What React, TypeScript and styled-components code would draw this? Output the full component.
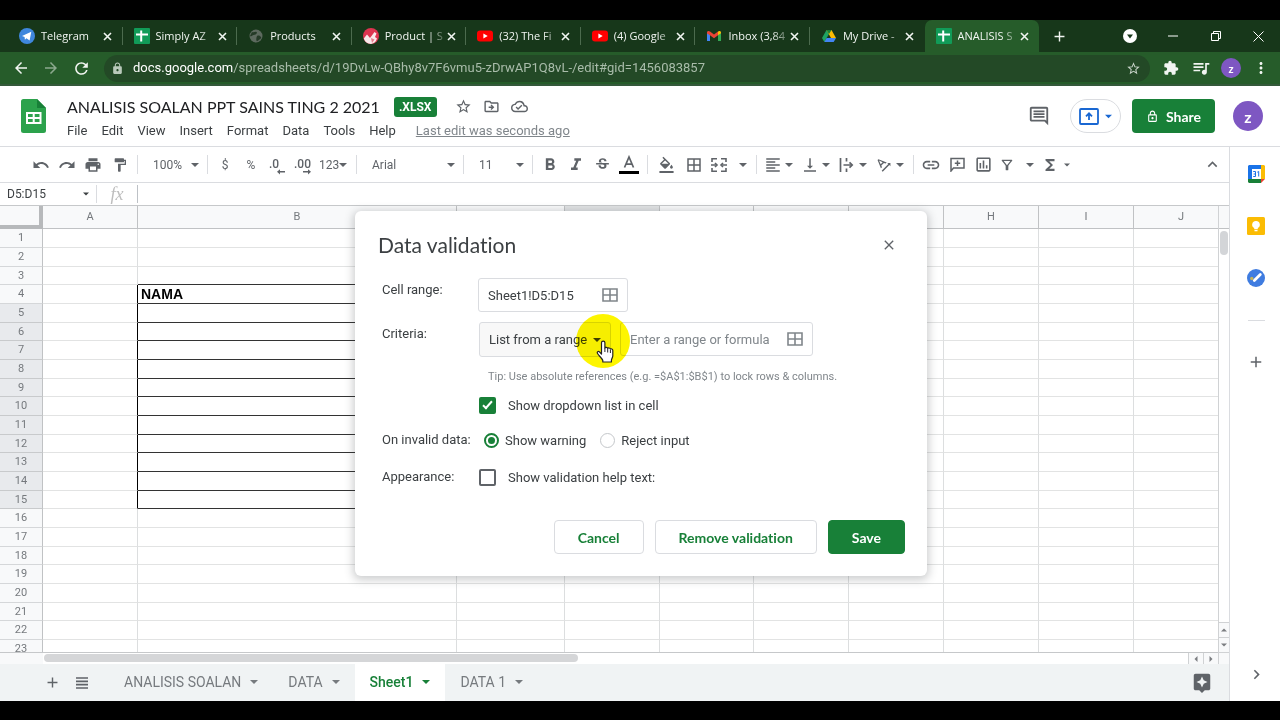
import React from "react";
import styled, { createGlobalStyle, css } from "styled-components";
import {
  MdAdd, MdArrowBack, MdArrowForward, MdAssistant, MdBorderAll, MdChevronRight, MdClose,
  MdExtension, MdFormatAlignLeft, MdFormatBold, MdFormatColorFill, MdFormatItalic, MdFormatPaint,
  MdFunctions, MdKeyboardArrowUp, MdLink, MdLock, MdMoreVert, MdOutlineCloudDone,
  MdOutlineDriveFileMove, MdOutlineFilterAlt, MdOutlineInsertChart, MdOutlineInsertComment,
  MdOutlineLock, MdPrint, MdQueueMusic, MdRedo, MdRefresh, MdStarBorder, MdStrikethroughS,
  MdTextRotationAngleup, MdUndo, MdVerticalAlignBottom,
} from "react-icons/md";

const ui = `Roboto, "Liberation Sans", sans-serif`;
const display = `Lato, "Open Sans", sans-serif`;
const chrome = `"Open Sans", "Noto Sans", sans-serif`;
const green = "#188038";
const iconGrey = "#5f6368";

const Global = createGlobalStyle`
  *, *::before, *::after { box-sizing: border-box; }
  body { margin: 0; background: #000; font-family: ${ui}; color: #3c4043; }
  button, input, select { font: inherit; color: inherit; margin: 0; padding: 0; border: 0; background: none; border-radius: 0; }
  button { display: inline-flex; align-items: center; justify-content: center; cursor: pointer; white-space: nowrap; }
  svg { display: block; flex: none; }
`;

const Page = styled.div`
  position: relative;
  display: flex;
  flex-direction: column;
  height: 100vh;
  padding: 20px 0 19px;
  background: #000;
  overflow: hidden;
`;

/* Browser window frame */
const TabStrip = styled.div`
  display: flex;
  flex: none;
  height: 32px;
  padding-left: 8px;
  background: #17371a;
  color: #f1f5f1;
  font-family: ${chrome};
`;
const TabList = styled.div`
  display: flex;
  flex: 0 1 1031px;
  min-width: 0;
`;
const BrowserTab = styled.div<{ $active?: boolean }>`
  display: flex;
  flex: 1 1 0;
  min-width: 0;
  align-items: center;
  padding: 0 9px 0 11px;
  position: relative;
  border-radius: 7px 7px 0 0;
  background: ${(p) => (p.$active ? "#265c2a" : "transparent")};
  &:not(:nth-last-child(-n + 2))::after {
    content: "";
    position: absolute;
    right: 0;
    top: 7px;
    width: 1px;
    height: 18px;
    background: #4c6b4e;
  }
`;
const TabTitle = styled.button<{ $fade: boolean }>`
  flex: 1;
  min-width: 0;
  margin-left: 6px;
  justify-content: flex-start;
  overflow: hidden;
  font-size: 11px;
  line-height: 16px;
  ${(p) => p.$fade && css`mask-image: linear-gradient(90deg, #000 72%, rgba(0, 0, 0, 0.2));`}
`;
const CloseTab = styled.button`
  width: 12px;
  height: 16px;
`;
const NewTab = styled.button`
  width: 40px;
`;
const WindowControls = styled.div`
  display: flex;
  margin-left: auto;
  align-items: center;
`;
const WindowButton = styled.button`
  width: 43px;
  height: 28px;
`;
const AddressRow = styled.div`
  display: flex;
  flex: none;
  align-items: center;
  height: 34px;
  padding: 0 4px 0 6px;
  background: #265c2a;
  border-bottom: 2px solid #34593a;
  color: #f1f5f1;
  font-family: ${chrome};
`;
const NavButton = styled.button<{ $dim?: boolean }>`
  width: 30px;
  height: 28px;
  opacity: ${(p) => (p.$dim ? 0.5 : 1)};
`;
const Omnibox = styled.div`
  display: flex;
  flex: 1;
  min-width: 0;
  align-items: center;
  gap: 9px;
  height: 27px;
  margin: 0 6px 0 8px;
  padding: 0 9px 0 7px;
  border-radius: 14px;
  background: #234926;
`;
const Url = styled.span`
  flex: 1;
  min-width: 0;
  overflow: hidden;
  white-space: nowrap;
  font-family: ${ui};
  font-size: 13px;
  line-height: 18px;
  color: #a9bcaa;
  b { font-weight: 400; color: #fff; }
`;
const Avatar = styled.button<{ $size: number }>`
  flex: none;
  width: ${(p) => p.$size}px;
  height: ${(p) => p.$size}px;
  border-radius: 50%;
  background: #7e57c2;
  color: #fff;
  font-family: ${display};
  font-weight: 700;
  font-size: ${(p) => (p.$size > 24 ? 16 : 11)}px;
`;
const ProfileSlot = styled.div`
  display: flex;
  justify-content: center;
  width: 30px;
`;

/* Document header */
const DocHeader = styled.header`
  display: flex;
  flex: none;
  align-items: center;
  height: 61px;
  padding: 0 17px 0 21px;
  background: #fff;
  border-bottom: 1px solid #dadce0;
`;
const DocInfo = styled.div`
  display: flex;
  flex-direction: column;
  gap: 3px;
  margin-left: 21px;
  padding-top: 4px;
`;
const TitleLine = styled.div`
  display: flex;
  align-items: center;
  height: 22px;
`;
const DocTitle = styled.h1`
  margin: 0 14px 0 0;
  font-family: ${display};
  font-weight: 400;
  font-size: 16px;
  line-height: 22px;
  color: #202124;
  white-space: nowrap;
`;
const Badge = styled.span`
  padding: 0 5px;
  margin-right: 13px;
  border-radius: 3px;
  background: ${green};
  color: #fff;
  font-weight: 700;
  font-size: 12px;
  line-height: 20px;
`;
const TitleIcon = styled.button`
  width: 28px;
  height: 22px;
  color: ${iconGrey};
`;
const MenuLine = styled.nav`
  display: flex;
  gap: 14px;
  font-size: 13px;
  line-height: 20px;
`;
const MenuButton = styled.button`
  line-height: 20px;
`;
const LastEdit = styled.a`
  margin-left: 6px;
  color: #80868b;
  white-space: nowrap;
`;
const HeaderActions = styled.div`
  display: flex;
  align-items: center;
  margin-left: auto;
`;
const PresentButton = styled.button`
  gap: 6px;
  width: 51px;
  height: 34px;
  margin: 0 11px 0 17px;
  border: 1px solid #dadce0;
  border-radius: 17px;
  color: #1967d2;
`;
const ShareButton = styled.button`
  gap: 7px;
  width: 83px;
  height: 34px;
  margin-right: 18px;
  border-radius: 4px;
  background: ${green};
  color: #fff;
  font-family: ${display};
  font-weight: 700;
  font-size: 14px;
`;

/* Work area */
const Work = styled.div`
  display: flex;
  flex: 1;
  min-height: 0;
  background: #fff;
`;
const Editor = styled.main`
  display: flex;
  flex: 1;
  flex-direction: column;
  min-width: 0;
  border-right: 1px solid #dadce0;
`;
const Toolbar = styled.div`
  display: flex;
  flex: none;
  align-items: center;
  height: 36px;
  padding: 0 4px 0 28px;
  border-bottom: 1px solid #dadce0;
  color: ${iconGrey};
  font-size: 12px;
`;
const Tool = styled.button<{ $w?: number }>`
  flex: none;
  width: ${(p) => p.$w ?? 26}px;
  height: 26px;
`;
const SplitTool = styled.button<{ $w?: number; $gap?: number }>`
  flex: none;
  justify-content: flex-start;
  gap: ${(p) => p.$gap ?? 3}px;
  width: ${(p) => p.$w ?? 37}px;
  height: 26px;
  padding-left: 3px;
`;
const Divider = styled.span`
  flex: none;
  width: 1px;
  height: 19px;
  margin: 0 4px;
  background: #dadce0;
`;
const SelectBox = styled.div<{ $w: number }>`
  display: grid;
  flex: none;
  align-items: center;
  width: ${(p) => p.$w}px;
  height: 26px;
  > * { grid-area: 1 / 1; }
  > svg { justify-self: end; margin-right: 4px; pointer-events: none; }
  select { appearance: none; width: 100%; height: 26px; padding-left: 11px; outline: 0; }
`;
const CollapseTool = styled(Tool)`
  margin-left: auto;
`;
const FormulaBar = styled.div`
  display: flex;
  flex: none;
  align-items: center;
  height: 22px;
  color: #3c4043;
`;
const NameBox = styled.label`
  display: flex;
  align-items: center;
  width: 97px;
  height: 18px;
  padding: 0 7px;
  border-right: 1px solid #dadce0;
  input { flex: 1; min-width: 0; width: 100%; font-size: 12px; outline: 0; }
`;
const FxLabel = styled.span`
  width: 41px;
  border-right: 1px solid #bdc1c6;
  text-align: center;
  font-family: "Liberation Serif", serif;
  font-style: italic;
  font-size: 18px;
  line-height: 18px;
  color: #bdbdbd;
`;
const FormulaInput = styled.input`
  flex: 1;
  min-width: 0;
  outline: 0;
`;

/* Spreadsheet grid */
const GridArea = styled.div`
  display: grid;
  flex: 1;
  min-height: 0;
  grid-template-columns: minmax(0, 1fr) 11px;
  grid-template-rows: minmax(0, 1fr) 11px;
  border-top: 1px solid #c6c8ca;
`;
const SheetView = styled.div`
  overflow: hidden;
  border-bottom: 1px solid #c6c8ca;
`;
const Sheet = styled.table`
  width: 1229px;
  table-layout: fixed;
  border-collapse: separate;
  border-spacing: 0;
  thead tr { height: 23px; }
  tbody tr { height: 19px; }
  tbody tr:nth-child(3n) { height: 18px; }
`;
const ColHead = styled.th<{ $selected?: boolean }>`
  padding: 0;
  border-right: 1px solid #c0c2c4;
  border-bottom: 1px solid #c0c2c4;
  background: ${(p) => (p.$selected ? "#e0e2e4" : "#f8f9fa")};
  font-weight: 400;
  font-size: 11px;
  line-height: 14px;
  color: #75797d;
`;
const Corner = styled.th`
  padding: 0;
  border-right: 4px solid #b7b9bb;
  border-bottom: 4px solid #b7b9bb;
  background: #f8f9fa;
`;
const RowHead = styled.th<{ $selected: boolean }>`
  padding: 0;
  border-right: 1px solid #c0c2c4;
  border-bottom: 1px solid ${(p) => (p.$selected ? "#c8cacc" : "#d5d7d9")};
  background: ${(p) => (p.$selected ? "#e8eaed" : "#f8f9fa")};
  font-weight: 400;
  font-size: 11px;
  line-height: 14px;
  color: #75797d;
`;
const Cell = styled.td<{ $darkRight: boolean; $darkBottom: boolean }>`
  padding: 0 3px;
  border-right: 1px solid ${(p) => (p.$darkRight ? "#000" : "#dcdedf")};
  border-bottom: 1px solid ${(p) => (p.$darkBottom ? "#333" : "#e2e3e3")};
  font-family: "Liberation Sans", Arial, sans-serif;
  font-weight: 700;
  font-size: 14px;
  line-height: 16px;
  color: #000;
`;
const VTrack = styled.div`
  display: flex;
  flex-direction: column;
  border-left: 1px solid #d0d2d4;
  border-bottom: 1px solid #d0d2d4;
  &::before { content: ""; height: 23px; flex: none; border-bottom: 1px solid #c0c2c4; background: #f8f9fa; }
`;
const HTrack = styled.div`
  display: flex;
  padding-left: 44px;
  background: linear-gradient(90deg, #f8f9fa 43px, #fff 43px);
`;
const VThumb = styled.span`
  height: 24px;
  margin: 2px 1px auto;
  border-radius: 4px;
  background: #d3d5d8;
`;
const HThumb = styled.span`
  flex: 0 1 534px;
  height: 8px;
  margin: 1px auto 0 0;
  border-radius: 4px;
  background: #d5d6d8;
`;
const ScrollButton = styled.button<{ $vertical?: boolean }>`
  flex: none;
  width: ${(p) => (p.$vertical ? "auto" : "15px")};
  height: ${(p) => (p.$vertical ? "15px" : "auto")};
  border-left: ${(p) => (p.$vertical ? "0" : "1px solid #d0d2d4")};
  border-top: ${(p) => (p.$vertical ? "1px solid #d0d2d4" : "0")};
  background: #f8f9fa;
  color: #7a7d80;
`;
const TrackCorner = styled.div`
  border-left: 1px solid #d0d2d4;
  background: #f8f9fa;
`;

const SheetTabs = styled.div`
  display: flex;
  flex: none;
  align-items: center;
  height: 37px;
  padding: 0 16px 0 39px;
  background: #f0f3f4;
  color: ${iconGrey};
`;
const SheetTab = styled.button<{ $active?: boolean }>`
  flex: none;
  gap: 9px;
  height: 37px;
  padding: 0 15px 2px;
  background: ${(p) => (p.$active ? "#fff" : "transparent")};
  color: ${(p) => (p.$active ? green : "#767a7e")};
  font-weight: ${(p) => (p.$active ? 500 : 400)};
  font-size: 14px;
`;
const ListSheets = styled(Tool)`
  margin: 0 14px 0 4px;
`;
const Explore = styled.button`
  margin-left: auto;
  color: ${iconGrey};
`;

const SidePanel = styled.aside`
  display: flex;
  flex: none;
  flex-direction: column;
  align-items: center;
  width: 50px;
  padding: 18px 0 17px 2px;
  color: ${iconGrey};
`;
const SideButton = styled.button`
  width: 30px;
  height: 18px;
  margin-bottom: 34px;
`;
const SideRule = styled.hr`
  width: 17px;
  margin: -1px 0 32px;
  border: 0;
  border-top: 1px solid #dadce0;
`;
const SideExpand = styled.button`
  margin-top: auto;
`;

/* Dialog */
const Overlay = styled.div`
  position: absolute;
  inset: 0;
  display: flex;
  align-items: flex-start;
  justify-content: center;
  padding: 211px 0 0 2px;
`;
const Dialog = styled.section`
  display: flex;
  flex-direction: column;
  width: 572px;
  padding: 22px 22px 22px 23px;
  border-radius: 6px;
  background: #fff;
  box-shadow: 0 2px 8px 2px rgba(60, 64, 67, 0.25);
  font-size: 13px;
`;
const DialogHead = styled.div`
  display: flex;
  align-items: center;
  justify-content: space-between;
  height: 24px;
  margin-bottom: 21px;
  padding-right: 8px;
`;
const DialogTitle = styled.h2`
  margin: 0;
  font-family: ${display};
  font-weight: 400;
  font-size: 21px;
  font-variant-ligatures: none;
  line-height: 24px;
  color: #3c4043;
`;
const Row = styled.div<{ $gap: number }>`
  display: flex;
  align-items: flex-start;
  margin-top: ${(p) => p.$gap}px;
  padding-left: 4px;
`;
const RowLabel = styled.span`
  flex: none;
  width: 96px;
  line-height: 24px;
  white-space: nowrap;
`;
const Field = styled.div<{ $w: number }>`
  display: flex;
  align-items: center;
  width: ${(p) => p.$w}px;
  height: 34px;
  padding: 0 9px;
  border: 1px solid #dadce0;
  border-radius: 3px;
  color: #80868b;
  input { flex: 1; min-width: 0; width: 100%; outline: 0; color: #3c4043; }
  input::placeholder { color: #80868b; opacity: 1; }
`;
const CriteriaSelect = styled.div`
  position: relative;
  display: grid;
  align-items: center;
  width: 132px;
  height: 35px;
  margin: 0 9px 0 1px;
  border: 1px solid #dadce0;
  border-radius: 3px;
  background: #f8f8f8;
  > select, > svg { grid-area: 1 / 1; }
  > svg { justify-self: end; margin-right: 9px; pointer-events: none; }
  select { appearance: none; height: 33px; padding-left: 9px; outline: 0; color: #3c4043; }
`;
const ClickHalo = styled.span`
  position: absolute;
  left: 96px;
  top: -9px;
  z-index: 1;
  width: 54px;
  height: 54px;
  border-radius: 50%;
  background: #fdf500;
  mix-blend-mode: multiply;
  pointer-events: none;
`;
const Pointer = styled.svg`
  position: absolute;
  left: 116px;
  top: 17px;
  z-index: 2;
`;
const Tip = styled.p`
  margin: 12px 0 0 110px;
  font-size: 11px;
  line-height: 16px;
  color: #80868b;
`;
const Choice = styled.label<{ $gap: number }>`
  display: flex;
  align-items: center;
  gap: ${(p) => p.$gap}px;
  height: 24px;
  margin-right: 14px;
  white-space: nowrap;
`;
const Check = styled.input`
  appearance: none;
  display: grid;
  place-items: center;
  width: 17px;
  height: 17px;
  margin-left: 1px;
  border: 2px solid #5f6368;
  border-radius: 2px;
  &:checked { border-color: ${green}; background: ${green}; }
  &:checked::after {
    content: "";
    width: 5px;
    height: 10px;
    border: solid #fff;
    border-width: 0 2px 2px 0;
    transform: rotate(42deg);
    margin-top: -3px;
  }
`;
const Radio = styled.input`
  appearance: none;
  display: grid;
  place-items: center;
  width: 15px;
  height: 15px;
  border: 1px solid #c4c7ca;
  border-radius: 50%;
  &:checked { border: 2px solid ${green}; }
  &:checked::after { content: ""; width: 7px; height: 7px; border-radius: 50%; background: ${green}; }
`;
const Radios = styled.div`
  display: flex;
  margin-left: 6px;
`;
const Actions = styled.div`
  display: flex;
  justify-content: flex-end;
  gap: 11px;
  margin-top: 31px;
`;
const ActionButton = styled.button<{ $primary?: boolean }>`
  height: 34px;
  padding: 0 23px;
  border: 1px solid ${(p) => (p.$primary ? green : "#dadce0")};
  border-radius: 4px;
  background: ${(p) => (p.$primary ? green : "#fff")};
  color: ${(p) => (p.$primary ? "#fff" : green)};
  font-family: ${display};
  font-weight: 700;
  font-size: 14px;
  font-variant-ligatures: none;
`;

/* Small drawings */
const Caret = ({ size = 8, dir = "down" }: { size?: number; dir?: "down" | "up" | "left" | "right" }) => {
  const d = { down: "M0 2h8L4 6z", up: "M0 6h8L4 2z", left: "M6 0v8L2 4z", right: "M2 0v8l4-4z" }[dir];
  return <svg width={size} height={size} viewBox="0 0 8 8"><path fill="currentColor" d={d} /></svg>;
};
const Cross = () => (
  <svg width="9" height="9" viewBox="0 0 9 9" stroke="currentColor" strokeWidth="1.6"><path d="M1 1l7 7M8 1L1 8" /></svg>
);
const TelegramIcon = () => (
  <svg width="16" height="16" viewBox="0 0 16 16"><circle cx="8" cy="8" r="8" fill="#3f87dd" /><path d="M3 8l9.300-4.200-1.700 8.800-3.200-2.300-1.500 1.500-.3-2.700z" fill="#fff" /></svg>
);
const SheetsFavicon = () => (
  <svg width="16" height="16" viewBox="0 0 16 16"><rect width="16" height="16" rx="1" fill="#119b58" /><path d="M6.200 2.500h2v11h-2zM2 5.500h12v2H2z" fill="#fff" /></svg>
);
const GlobeIcon = () => (
  <svg width="16" height="16" viewBox="0 0 16 16"><circle cx="8" cy="8" r="6.500" fill="#5d6a5f" /><path d="M4 4c2 1 3-1 4.500 0S7 7 5.500 7 4 9 2 8M9 8c2-1 3 0 4 1s-2 3-3.500 4S8 10 9 8z" fill="#243a27" /></svg>
);
const ProductIcon = () => (
  <svg width="16" height="16" viewBox="0 0 16 16"><circle cx="8" cy="8" r="8" fill="#dd3450" /><path d="M.8 10.500L4 6.500l3 3.500 4.500-6 2 1.500L12 9l2 1.500A8 8 0 0 1 8 16 8 8 0 0 1 .8 10.500z" fill="#f8e8ea" /><path d="M8 10l3.500 1.500L9 15z" fill="#e77a8a" /></svg>
);
const YoutubeIcon = () => (
  <svg width="16" height="16" viewBox="0 0 16 16"><rect y="2.500" width="16" height="11" rx="3" fill="#f00" /><path d="M6.400 5.500v5l4.300-2.500z" fill="#fff" /></svg>
);
const GmailIcon = () => (
  <svg width="16" height="16" viewBox="0 0 16 16">
    <path d="M1 4v9h3V7z" fill="#4285f4" /><path d="M15 4v9h-3V7z" fill="#34a853" />
    <path d="M1 4.500C1 3 2.500 2.500 4 3.500l4 3 4-3v3.800l-4 3-4-3L1 5.500z" fill="#ea4335" /><path d="M12 3.500c1.500-1 3-.5 3 1v.8l-3 2z" fill="#fbbc04" />
  </svg>
);
const DriveIcon = () => (
  <svg width="16" height="16" viewBox="0 0 16 16">
    <path d="M5.500 2L1 10l2.300 4L8 6z" fill="#1ea362" /><path d="M5.500 2h5L15 10h-5z" fill="#fbbc04" /><path d="M5.600 10H15l-2.300 4H3.300z" fill="#4285f4" /><path d="M5.500 2h5L8 6z" fill="#188038" />
  </svg>
);
const SheetsLogo = () => (
  <svg width="25" height="34" viewBox="0 0 25 34">
    <path d="M2.500 0H16l9 9v22.500a2.500 2.500 0 0 1-2.500 2.500h-20A2.500 2.500 0 0 1 0 31.500v-29A2.500 2.500 0 0 1 2.500 0z" fill="#2ca24c" />
    <path d="M16 0l9 9h-9z" fill="#188038" />
    <path d="M5 13h15.500v12H5zM7 15v3h4.700v-3zm6.700 0v3h4.800v-3zM7 20v3h4.700v-3zm6.700 0v3h4.800v-3z" fill="#fff" fillRule="evenodd" />
  </svg>
);
const TextColorIcon = () => (
  <svg width="20" height="20" viewBox="0 0 20 20"><path d="M5.500 12.500L10 2l4.500 10.500M7 9.200h6" fill="none" stroke={iconGrey} strokeWidth="1.700" /><path d="M0 16h20v3H0z" fill="#000" /></svg>
);
const MergeIcon = () => (
  <svg width="16" height="16" viewBox="0 0 16 16" fill="none" stroke="currentColor" strokeWidth="1.600">
    <path d="M6 1.800H1V5M10 1.800h5V5M6 14.200H1V11M10 14.200h5V11M0 8h5.500M16 8h-5.500" /><path d="M4 6l2 2-2 2M12 6l-2 2 2 2" />
  </svg>
);
const OverflowIcon = () => (
  <svg width="16" height="16" viewBox="0 0 16 16" fill="none" stroke="currentColor" strokeWidth="1.700">
    <path d="M2.500 1v14M8.500 1v3.500M8.500 11.500V15M5.500 8H14" /><path d="M11.500 5.300L14.200 8l-2.700 2.700" />
  </svg>
);
const DecimalTool = ({ text, right }: { text: string; right?: boolean }) => (
  <svg width="20" height="20" viewBox="0 0 20 20" fontFamily="Roboto, sans-serif" fontSize="12" fontWeight="500" fill="currentColor">
    <text x={right ? 1 : 2} y="13">{text}</text>
    <path d={right ? "M10 16h5v-1.800l3 2.600-3 2.600v-1.800h-5z" : "M18 16h-5v-1.800l-3 2.600 3 2.600v-1.800h5z"} />
  </svg>
);
const AddCommentIcon = () => (
  <svg width="15" height="15" viewBox="0 0 15 15" fill="none" stroke="currentColor" strokeWidth="1.500">
    <path d="M1 14V1.500h13V11H3.500zM7.500 3.500v5.500M4.800 6.200h5.400" />
  </svg>
);
const PresentIcon = () => (
  <svg width="20" height="17" viewBox="0 0 20 17" fill="none" stroke="currentColor" strokeWidth="1.800">
    <rect x="1" y="1" width="18" height="15" rx="1" /><path d="M10 12V5.500M7 8.300l3-3 3 3" />
  </svg>
);
const ListIcon = () => (
  <svg width="12" height="12" viewBox="0 0 12 12" stroke="currentColor" strokeWidth="1.700"><path d="M0 1h12M0 4.300h12M0 7.600h12M0 11h12" /></svg>
);
const CalendarIcon = () => (
  <svg width="17" height="18" viewBox="0 0 17 18">
    <path d="M1 0h12v4H4v10H0V1z" fill="#1a73e8" /><path d="M13 0h3l1 1v13h-4z" fill="#fbbc04" /><path d="M0 14h13v4H1l-1-1z" fill="#188038" />
    <path d="M13 14h4l-4 4z" fill="#ea4335" /><path d="M4 4h9v10H4z" fill="#fff" />
    <path d="M5.200 6.500h2.300v5H5.200M5.600 9h1.900M9.300 7.200l1.400-.7v5" fill="none" stroke="#1a73e8" strokeWidth="1" />
  </svg>
);
const KeepIcon = () => (
  <svg width="18" height="18" viewBox="0 0 18 18"><rect width="18" height="18" rx="1.500" fill="#fbbc04" /><path d="M9 4a3.700 3.700 0 0 1 1.800 7v1.200H7.200V11A3.700 3.700 0 0 1 9 4zM7.500 13h3v1.200h-3z" fill="#fff" /></svg>
);
const TasksIcon = () => (
  <svg width="18" height="18" viewBox="0 0 18 18"><circle cx="9" cy="9" r="9" fill="#3f7ce0" /><path d="M7.300 11.500l6-6" stroke="#fff" strokeWidth="2.800" strokeLinecap="round" /><circle cx="4.800" cy="9.500" r="1.700" fill="#c5b45c" /></svg>
);
const GridIcon = () => (
  <svg width="16" height="14" viewBox="0 0 16 14" fill="none" stroke="currentColor" strokeWidth="1.600"><path d="M1 1h14v12H1zM8 1v12M1 7h14" /></svg>
);

const browserTabs = [
  { title: "Telegram", icon: <TelegramIcon />, fade: false },
  { title: "Simply AZ", icon: <SheetsFavicon />, fade: true },
  { title: "Products", icon: <GlobeIcon />, fade: false },
  { title: "Product | S", icon: <ProductIcon />, fade: true },
  { title: "(32) The Fi", icon: <YoutubeIcon />, fade: true },
  { title: "(4) Google", icon: <YoutubeIcon />, fade: true },
  { title: "Inbox (3,84", icon: <GmailIcon />, fade: true },
  { title: "My Drive -", icon: <DriveIcon />, fade: true },
  { title: "ANALISIS S", icon: <SheetsFavicon />, fade: true },
];
const menus = ["File", "Edit", "View", "Insert", "Format", "Data", "Tools", "Help"];
const columns: [string, number][] = [
  ["A", 95], ["B", 319], ["C", 108], ["D", 95], ["E", 94], ["F", 95], ["G", 95], ["H", 95], ["I", 95], ["J", 95],
];
const rows = Array.from({ length: 23 }, (_, i) => i + 1);
const sheets = ["ANALISIS SOALAN", "DATA", "Sheet1", "DATA 1"];

const BrowserFrame = () => (
  <>
    <TabStrip>
      <TabList>
        {browserTabs.map((t, i) => (
          <BrowserTab key={t.title} $active={i === browserTabs.length - 1}>
            {t.icon}
            <TabTitle $fade={t.fade}>{t.title}</TabTitle>
            <CloseTab aria-label="Close tab"><Cross /></CloseTab>
          </BrowserTab>
        ))}
      </TabList>
      <NewTab aria-label="New tab"><MdAdd size={17} /></NewTab>
      <WindowControls>
        <WindowButton aria-label="Search tabs">
          <svg width="14" height="14" viewBox="0 0 14 14"><circle cx="7" cy="7" r="7" fill="#fff" /><path d="M4 5.500h6l-3 4z" fill="#17371a" /></svg>
        </WindowButton>
        <WindowButton aria-label="Minimize"><svg width="10" height="2"><path d="M0 1h10" stroke="#fff" /></svg></WindowButton>
        <WindowButton aria-label="Restore">
          <svg width="10" height="10" viewBox="0 0 10 10" fill="none" stroke="#fff"><path d="M.5 2.500h7v7h-7zM2.500 2.500v-2h7v7h-2" /></svg>
        </WindowButton>
        <WindowButton aria-label="Close"><svg width="11" height="11" viewBox="0 0 11 11" stroke="#fff"><path d="M.5.5l10 10M10.500.5l-10 10" /></svg></WindowButton>
      </WindowControls>
    </TabStrip>
    <AddressRow>
      <NavButton aria-label="Back"><MdArrowBack size={18} /></NavButton>
      <NavButton aria-label="Forward" $dim><MdArrowForward size={18} /></NavButton>
      <NavButton aria-label="Reload"><MdRefresh size={19} /></NavButton>
      <Omnibox>
        <MdLock size={13} color="#b9c8ba" />
        <Url><b>docs.google.com</b>/spreadsheets/d/19DvLw-QBhy8v7F6vmu5-zDrwAP1Q8vL-/edit#gid=1456083857</Url>
        <MdStarBorder size={15} color="#c9d4ca" />
      </Omnibox>
      <NavButton aria-label="Extensions"><MdExtension size={16} /></NavButton>
      <NavButton aria-label="Media"><MdQueueMusic size={20} /></NavButton>
      <ProfileSlot><Avatar $size={20}>z</Avatar></ProfileSlot>
      <NavButton aria-label="More"><MdMoreVert size={18} /></NavButton>
    </AddressRow>
  </>
);

const Header = () => (
  <DocHeader>
    <SheetsLogo />
    <DocInfo>
      <TitleLine>
        <DocTitle>ANALISIS SOALAN PPT SAINS TING 2 2021</DocTitle>
        <Badge>.XLSX</Badge>
        <TitleIcon aria-label="Star"><MdStarBorder size={17} /></TitleIcon>
        <TitleIcon aria-label="Move"><MdOutlineDriveFileMove size={17} /></TitleIcon>
        <TitleIcon aria-label="Cloud status"><MdOutlineCloudDone size={17} /></TitleIcon>
      </TitleLine>
      <MenuLine>
        {menus.map((m) => <MenuButton key={m}>{m}</MenuButton>)}
        <LastEdit href="#history">Last edit was seconds ago</LastEdit>
      </MenuLine>
    </DocInfo>
    <HeaderActions>
      <TitleIcon aria-label="Comments"><MdOutlineInsertComment size={22} /></TitleIcon>
      <PresentButton aria-label="Present"><PresentIcon /><Caret size={7} /></PresentButton>
      <ShareButton><MdOutlineLock size={13} />Share</ShareButton>
      <Avatar $size={30}>z</Avatar>
    </HeaderActions>
  </DocHeader>
);

const ToolSelect = ({ label, value, w }: { label: string; value: string; w: number }) => (
  <SelectBox $w={w}>
    <select aria-label={label} defaultValue={value}><option>{value}</option></select>
    <Caret />
  </SelectBox>
);

const EditToolbar = () => (
  <Toolbar role="toolbar">
    <Tool aria-label="Undo"><MdUndo size={18} /></Tool>
    <Tool aria-label="Redo"><MdRedo size={18} /></Tool>
    <Tool aria-label="Print"><MdPrint size={18} /></Tool>
    <Tool $w={27} aria-label="Paint format"><MdFormatPaint size={16} /></Tool>
    <Divider />
    <ToolSelect label="Zoom" value="100%" w={61} />
    <Divider />
    <Tool>$</Tool>
    <Tool>%</Tool>
    <Tool aria-label="Decrease decimal places"><DecimalTool text=".0" /></Tool>
    <Tool aria-label="Increase decimal places"><DecimalTool text=".00" right /></Tool>
    <SplitTool $w={36} $gap={0}>123<Caret /></SplitTool>
    <Divider />
    <ToolSelect label="Font" value="Arial" w={98} />
    <Divider />
    <ToolSelect label="Font size" value="11" w={60} />
    <Divider />
    <Tool aria-label="Bold"><MdFormatBold size={20} /></Tool>
    <Tool aria-label="Italic"><MdFormatItalic size={20} /></Tool>
    <Tool aria-label="Strikethrough"><MdStrikethroughS size={17} /></Tool>
    <Tool $w={28} aria-label="Text color"><TextColorIcon /></Tool>
    <Divider />
    <Tool $w={28} aria-label="Fill color"><MdFormatColorFill size={17} viewBox="0 0 24 22" /></Tool>
    <Tool $w={28} aria-label="Borders"><MdBorderAll size={18} /></Tool>
    <SplitTool $w={44} $gap={12} aria-label="Merge cells"><MergeIcon /><Caret /></SplitTool>
    <Divider />
    <SplitTool aria-label="Horizontal align"><MdFormatAlignLeft size={18} /><Caret /></SplitTool>
    <SplitTool aria-label="Vertical align"><MdVerticalAlignBottom size={18} /><Caret /></SplitTool>
    <SplitTool $gap={5} aria-label="Text wrapping"><OverflowIcon /><Caret /></SplitTool>
    <SplitTool aria-label="Text rotation"><MdTextRotationAngleup size={18} /><Caret /></SplitTool>
    <Divider />
    <Tool aria-label="Insert link"><MdLink size={20} /></Tool>
    <Tool aria-label="Insert comment"><AddCommentIcon /></Tool>
    <Tool aria-label="Insert chart"><MdOutlineInsertChart size={19} /></Tool>
    <SplitTool $w={42} $gap={11} aria-label="Filter"><MdOutlineFilterAlt size={16} /><Caret /></SplitTool>
    <SplitTool $gap={5} aria-label="Functions"><MdFunctions size={18} /><Caret size={6} /></SplitTool>
    <CollapseTool aria-label="Hide menus"><MdKeyboardArrowUp size={19} /></CollapseTool>
  </Toolbar>
);

const SheetGrid = () => {
  const inBox = (row: number, col: number) => row >= 4 && row <= 15 && col >= 1 && col <= 5;
  return (
    <GridArea>
      <SheetView>
        <Sheet>
          <colgroup>
            <col width={43} />
            {columns.map(([name, w]) => <col key={name} width={w} />)}
          </colgroup>
          <thead>
            <tr>
              <Corner aria-label="Select all" />
              {columns.map(([name]) => <ColHead key={name} $selected={name === "D"}>{name}</ColHead>)}
            </tr>
          </thead>
          <tbody>
            {rows.map((r) => (
              <tr key={r}>
                <RowHead $selected={r >= 5 && r <= 15}>{r}</RowHead>
                {columns.map(([name], c) => (
                  <Cell
                    key={name}
                    $darkRight={inBox(r, c) || inBox(r, c + 1)}
                    $darkBottom={inBox(r, c) || inBox(r + 1, c)}
                  >
                    {r === 4 && name === "B" ? "NAMA" : null}
                  </Cell>
                ))}
              </tr>
            ))}
          </tbody>
        </Sheet>
      </SheetView>
      <VTrack>
        <VThumb />
        <ScrollButton $vertical aria-label="Scroll up"><Caret size={6} dir="up" /></ScrollButton>
        <ScrollButton $vertical aria-label="Scroll down"><Caret size={6} dir="down" /></ScrollButton>
      </VTrack>
      <HTrack>
        <HThumb />
        <ScrollButton aria-label="Scroll left"><Caret size={6} dir="left" /></ScrollButton>
        <ScrollButton aria-label="Scroll right"><Caret size={6} dir="right" /></ScrollButton>
      </HTrack>
      <TrackCorner />
    </GridArea>
  );
};

const ValidationDialog = () => (
  <Overlay>
    <Dialog role="dialog" aria-labelledby="dv-title">
      <DialogHead>
        <DialogTitle id="dv-title">Data validation</DialogTitle>
        <button aria-label="Close dialog"><MdClose size={16} color="#5f6368" /></button>
      </DialogHead>
      <Row $gap={0}>
        <RowLabel as="label" htmlFor="dv-range">Cell range:</RowLabel>
        <Field $w={150}>
          <input id="dv-range" defaultValue="Sheet1!D5:D15" />
          <button aria-label="Select data range"><GridIcon /></button>
        </Field>
      </Row>
      <Row $gap={10}>
        <RowLabel as="label" htmlFor="dv-criteria">Criteria:</RowLabel>
        <CriteriaSelect>
          <select id="dv-criteria" defaultValue="List from a range"><option>List from a range</option></select>
          <Caret />
          <ClickHalo />
          <Pointer width="18" height="23" viewBox="0 0 18 23">
            <path
              d="M5.500 14V2.800a1.700 1.700 0 0 1 3.400 0V8c.3-1 2.600-.8 2.800.5.500-.9 2.500-.6 2.700.7.700-.7 2.400-.2 2.400 1.300v5.300c0 2-1.400 2.700-1.400 4.700V22H6.800v-1.500C6.300 18.500 3 16 1.400 13.300c-.7-1.200.8-2.400 2-1.500z"
              fill="#fff" stroke="#222" strokeWidth="1.200" strokeLinejoin="round"
            />
            <path d="M8.900 8v4M11.700 9v3.500M14.400 10v3" stroke="#222" />
          </Pointer>
        </CriteriaSelect>
        <Field $w={193}>
          <input aria-label="Range or formula" placeholder="Enter a range or formula" />
          <button aria-label="Select criteria range"><GridIcon /></button>
        </Field>
      </Row>
      <Tip>Tip: Use absolute references (e.g. =$A$1:$B$1) to lock rows &amp; columns.</Tip>
      <Row $gap={8}>
        <RowLabel />
        <Choice $gap={12}><Check type="checkbox" defaultChecked />Show dropdown list in cell</Choice>
      </Row>
      <Row $gap={11}>
        <RowLabel>On invalid data:</RowLabel>
        <Radios>
          <Choice $gap={6}><Radio type="radio" name="invalid" defaultChecked />Show warning</Choice>
          <Choice $gap={6}><Radio type="radio" name="invalid" />Reject input</Choice>
        </Radios>
      </Row>
      <Row $gap={13}>
        <RowLabel>Appearance:</RowLabel>
        <Choice $gap={12}><Check type="checkbox" />Show validation help text:</Choice>
      </Row>
      <Actions>
        <ActionButton>Cancel</ActionButton>
        <ActionButton>Remove validation</ActionButton>
        <ActionButton $primary>Save</ActionButton>
      </Actions>
    </Dialog>
  </Overlay>
);

export default function App() {
  return (
    <Page>
      <Global />
      <BrowserFrame />
      <Header />
      <Work>
        <Editor>
          <EditToolbar />
          <FormulaBar>
            <NameBox><input aria-label="Name box" defaultValue="D5:D15" /><Caret size={6} /></NameBox>
            <FxLabel>fx</FxLabel>
            <FormulaInput aria-label="Formula" />
          </FormulaBar>
          <SheetGrid />
          <SheetTabs>
            <Tool aria-label="Add sheet"><MdAdd size={17} /></Tool>
            <ListSheets aria-label="All sheets"><ListIcon /></ListSheets>
            {sheets.map((s) => <SheetTab key={s} $active={s === "Sheet1"}>{s}<Caret /></SheetTab>)}
            <Explore aria-label="Explore"><MdAssistant size={22} /></Explore>
          </SheetTabs>
        </Editor>
        <SidePanel>
          <SideButton aria-label="Calendar"><CalendarIcon /></SideButton>
          <SideButton aria-label="Keep"><KeepIcon /></SideButton>
          <SideButton aria-label="Tasks"><TasksIcon /></SideButton>
          <SideRule />
          <SideButton aria-label="Get add-ons"><MdAdd size={18} /></SideButton>
          <SideExpand aria-label="Show side panel"><MdChevronRight size={19} /></SideExpand>
        </SidePanel>
      </Work>
      <ValidationDialog />
    </Page>
  );
}
